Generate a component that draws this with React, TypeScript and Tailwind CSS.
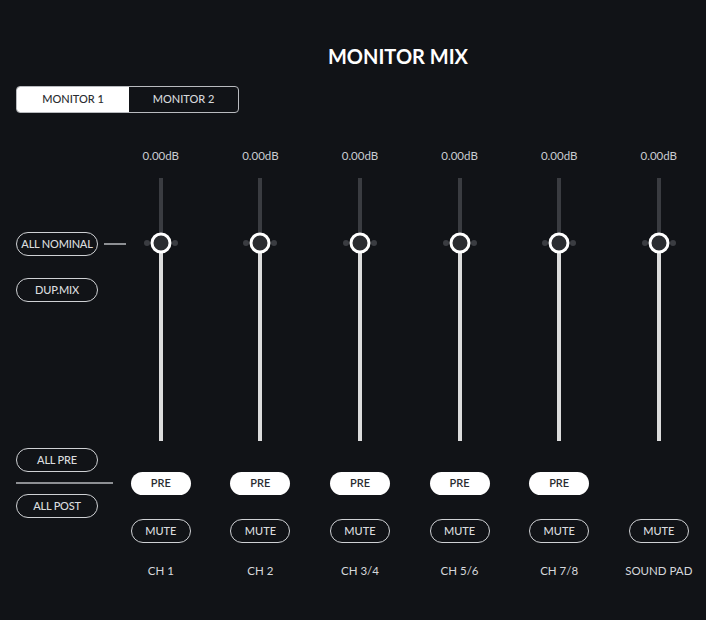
import React from 'react';

const channels = [
  { name: 'CH 1', pre: true },
  { name: 'CH 2', pre: true },
  { name: 'CH 3/4', pre: true },
  { name: 'CH 5/6', pre: true },
  { name: 'CH 7/8', pre: true },
  { name: 'SOUND PAD', pre: false },
];

const Fader = () => (
  <div className="relative mt-[10px] h-[263px] w-[4px]">
    <div className="h-[65px] w-full bg-[#3a3c41]" />
    <div className="h-[198px] w-full bg-[#dcdcdc]" />
    <div className="absolute left-1/2 top-[65px] h-[6px] w-[6px] -translate-y-1/2 translate-x-[-17px] rounded-full bg-[#3a3c41]" />
    <div className="absolute left-1/2 top-[65px] h-[6px] w-[6px] -translate-y-1/2 translate-x-[11px] rounded-full bg-[#3a3c41]" />
    <div className="absolute left-1/2 top-[65px] h-[21px] w-[21px] -translate-x-1/2 -translate-y-1/2 rounded-full border-[3px] border-white bg-[#2a2c30]" />
  </div>
);

const Channel = ({ name, pre }: { name: string; pre: boolean }) => (
  <div className="flex w-[99.6px] shrink-0 flex-col items-center">
    <div className="h-[24px] text-[11.5px] leading-[24px] text-[#c9ccd1]">0.00dB</div>
    <Fader />
    <button
      className={`mt-[31px] h-[23px] w-[60px] rounded-full bg-white text-[11px] font-semibold text-[#2a2c30] ${
        pre ? '' : 'invisible'
      }`}
    >
      PRE
    </button>
    <button className="mt-[24px] h-[24px] w-[60px] rounded-full border-[1.5px] border-[#cfd1d4] text-[11px] font-medium text-[#dadcdf]">
      MUTE
    </button>
    <div className="mt-[18px] h-[20px] text-[11.5px] leading-[20px] text-[#d6d8dc]">{name}</div>
  </div>
);

const SideButton = ({ label }: { label: string }) => (
  <button className="h-[24px] w-[82px] shrink-0 rounded-full border-[1.5px] border-[#cfd1d4] text-[11px] font-medium tracking-[-0.2px] text-[#dadcdf]">
    {label}
  </button>
);

export default function App() {
  return (
    <div
      className="relative h-[620px] w-[706px] overflow-hidden bg-[#111317]"
      style={{ fontFamily: 'Lato, "Noto Sans", sans-serif' }}
    >
      <h1 className="pl-[90px] pt-[42px] text-center text-[20px] font-bold leading-[28px] text-white">
        MONITOR MIX
      </h1>

      <div className="ml-[16px] mt-[16px] flex h-[27px] w-[223px] overflow-hidden rounded-[4px] border border-[#b9bbbf]">
        <button className="w-[112px] bg-white text-[11px] font-medium text-[#2a2c30]">MONITOR 1</button>
        <button className="flex-1 text-[11px] font-medium text-[#d6d8dc]">MONITOR 2</button>
      </div>

      <div className="mt-[31px] flex">
        <div className="flex w-[111px] shrink-0 flex-col pl-[16px]">
          <div className="mt-[88px] flex items-center">
            <SideButton label="ALL NOMINAL" />
            <div className="ml-[6px] h-[1.5px] w-[22px] shrink-0 bg-[#8d8f93]" />
          </div>
          <div className="mt-[22px] flex">
            <SideButton label="DUP.MIX" />
          </div>
          <div className="mt-[146px] flex">
            <SideButton label="ALL PRE" />
          </div>
          <div className="mt-[10px] h-[2px] w-[97px] bg-[#8d8f93]" />
          <div className="mt-[10px] flex">
            <SideButton label="ALL POST" />
          </div>
        </div>

        <div className="flex">
          {channels.map((c) => (
            <Channel key={c.name} name={c.name} pre={c.pre} />
          ))}
        </div>
      </div>
    </div>
  );
}
